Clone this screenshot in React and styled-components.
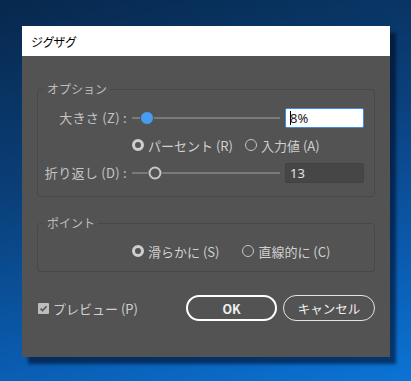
import styled, { createGlobalStyle } from 'styled-components';

const GlobalStyle = createGlobalStyle`
    html, body {
        margin: 0;
        padding: 0;
    }

    body {
        width: 411px;
        height: 381px;
        overflow: hidden;
        font-family: "Noto Sans CJK JP", "Noto Sans", sans-serif;
        background: linear-gradient(165deg, #07284d 0%, #0a3f78 40%, #0a5cb0 75%, #0b74d6 100%);
    }
`

const Desktop = styled.main`
    padding: 26px 0 0 22px;
`

const Dialog = styled.section`
    width: 368px;
    background: #535353;
    box-shadow: 6px 7px 3px rgba(0, 8, 30, 0.55);
`

const TitleBar = styled.header`
    height: 30px;
    background: #fff;
    display: flex;
    align-items: center;
    padding-left: 9px;
    font-size: 12px;
    font-feature-settings: "palt";
    color: #000;
`

const Body = styled.div`
    height: 301px;
    padding: 25px 15px 0 15px;
    box-sizing: border-box;
    display: flex;
    flex-direction: column;
`

const Group = styled.fieldset`
    margin: 0 0 ${props => props.$gap || 0}px 0;
    padding: 0 10px 0 0;
    border: 1px solid #484848;
    border-radius: 3px;
    height: ${props => props.$height}px;
    box-sizing: border-box;
    display: flex;
    flex-direction: column;

    legend {
        margin-left: 5px;
        padding: 0 3px 0 4px;
        font-size: 12px;
        line-height: 16px;
        color: #bdbdbd;
    }
`

const Row = styled.div`
    display: grid;
    grid-template-columns: 89px 148px 79px;
    column-gap: 5px;
    align-items: center;
    height: ${props => props.$height || 27}px;
    margin-top: ${props => props.$top || 0}px;
`

const Label = styled.label`
    font-size: 13px;
    letter-spacing: 0.3px;
    color: #c4c4c4;
    text-align: right;
    white-space: nowrap;
`

const Radios = styled.div`
    grid-column: 2 / 4;
    display: flex;
    align-items: center;
    gap: ${props => props.$gap}px;
`

const RadioItem = styled.span`
    display: flex;
    align-items: center;
    gap: 4px;
    font-size: 13px;
    color: #d0d0d0;
    white-space: nowrap;
`

const RadioDot = styled.span`
    width: 12px;
    height: 12px;
    border-radius: 50%;
    box-sizing: border-box;
    flex-shrink: 0;
    border: ${props => props.$on ? '3px solid #cfcfcf' : '1.5px solid #c4c4c4'};
    background: ${props => props.$on ? '#555' : 'transparent'};
`

const Slider = styled.div`
    position: relative;
    height: 14px;
    display: flex;
    align-items: center;

    &::before {
        content: '';
        flex: 1;
        height: 2px;
        background: #7a7a7a;
    }
`

const Thumb = styled.span`
    position: absolute;
    top: 50%;
    left: ${props => props.$at}px;
    width: ${props => props.$filled ? 14 : 13}px;
    height: ${props => props.$filled ? 14 : 13}px;
    transform: translate(-50%, -50%);
    border-radius: 50%;
    box-sizing: border-box;
    background: ${props => props.$filled ? '#459cf1' : '#535353'};
    border: ${props => props.$filled ? '1px solid #535353' : '2.5px solid #c8c8c8'};
    box-shadow: ${props => props.$filled ? 'none' : '0 0 0 1px #535353'};
`

const Field = styled.div`
    height: 20px;
    box-sizing: border-box;
    border-radius: 2px;
    padding: 0 4px;
    display: flex;
    align-items: center;
    font-family: "Noto Sans", "Noto Sans CJK JP", sans-serif;
    font-size: 13px;
    background: ${props => props.$active ? '#fff' : '#464646'};
    border: 1px solid ${props => props.$active ? '#3e8de0' : '#424242'};
    color: ${props => props.$active ? '#222' : '#e2e2e2'};
`

const Caret = styled.span`
    width: 1px;
    height: 14px;
    background: #000;
    margin-right: -1px;
`

const Footer = styled.div`
    display: flex;
    align-items: center;
    margin-top: 23px;
    height: 26px;
`

const Preview = styled.span`
    display: flex;
    align-items: center;
    gap: 4px;
    margin-left: 1px;
    font-size: 13px;
    color: #d0d0d0;
    flex: 1;
`

const CheckBox = styled.span`
    width: 11px;
    height: 11px;
    border-radius: 1px;
    background: #bdbdbd;
    display: flex;
    align-items: center;
    justify-content: center;
`

const Button = styled.button`
    width: ${props => props.$width}px;
    height: 26px;
    margin-left: ${props => props.$left || 0}px;
    border-radius: 13px;
    background: transparent;
    border: ${props => props.$primary ? '2px solid #fff' : '1.5px solid #e4e4e4'};
    color: #f0f0f0;
    font-family: "Noto Sans CJK JP", "Noto Sans", sans-serif;
    font-size: 12.5px;
    font-weight: ${props => props.$primary ? 600 : 400};
    padding: 0;
`

function App() {
    return (
        <Desktop>
            <GlobalStyle />
            <Dialog>
                <TitleBar>ジグザグ</TitleBar>
                <Body>
                    <Group $height={116} $gap={18}>
                        <legend>オプション</legend>
                        <Row $top={7}>
                            <Label>大きさ (Z) :</Label>
                            <Slider><Thumb $at={15} $filled /></Slider>
                            <Field $active><Caret />8%</Field>
                        </Row>
                        <Row $height={28}>
                            <span />
                            <Radios $gap={12}>
                                <RadioItem><RadioDot $on />パーセント (R)</RadioItem>
                                <RadioItem><RadioDot />入力値 (A)</RadioItem>
                            </Radios>
                        </Row>
                        <Row>
                            <Label>折り返し (D) :</Label>
                            <Slider><Thumb $at={23} /></Slider>
                            <Field>13</Field>
                        </Row>
                    </Group>
                    <Group $height={57}>
                        <legend>ポイント</legend>
                        <Row $height={26} $top={7}>
                            <span />
                            <Radios $gap={23}>
                                <RadioItem><RadioDot $on />滑らかに (S)</RadioItem>
                                <RadioItem><RadioDot />直線的に (C)</RadioItem>
                            </Radios>
                        </Row>
                    </Group>
                    <Footer>
                        <Preview>
                            <CheckBox>
                                <svg width="9" height="9" viewBox="0 0 9 9">
                                    <path d="M1.5 4.6 L3.6 6.6 L7.6 2.2" fill="none" stroke="#555" strokeWidth="1.6" />
                                </svg>
                            </CheckBox>
                            プレビュー (P)
                        </Preview>
                        <Button $primary $width={91}>OK</Button>
                        <Button $width={92} $left={6}>キャンセル</Button>
                    </Footer>
                </Body>
            </Dialog>
        </Desktop>
    );
};

export default App;
